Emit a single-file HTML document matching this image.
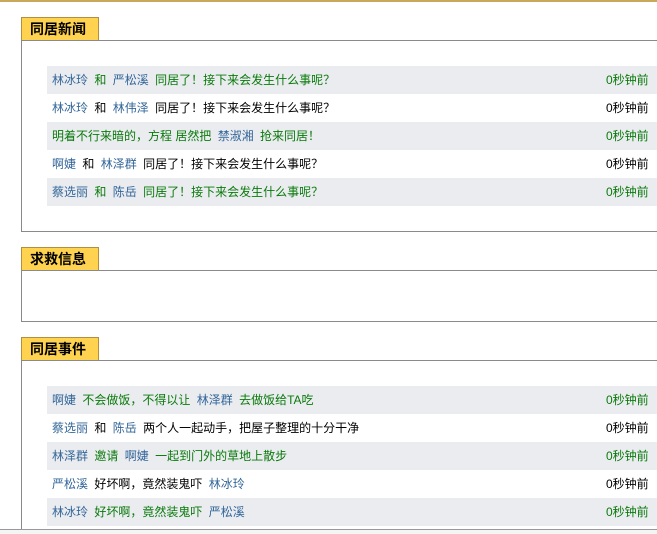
<!DOCTYPE html>
<html><head><meta charset="utf-8"><style>
*{margin:0;padding:0;box-sizing:border-box}
html,body{width:657px;height:534px;overflow:hidden}
body{background:#fff;font-family:"Liberation Sans","Noto Sans CJK SC","WenQuanYi Zen Hei",sans-serif;font-size:12px;position:relative}
.topline{position:absolute;left:0;top:0;width:657px;height:2px;background:#c8a85a}
.tab{position:absolute;left:21px;width:78px;height:24px;background:#ffd24f;border:1px solid #b09040;border-bottom:none;font-weight:bold;font-size:14px;line-height:22px;padding-left:8px;color:#000}
.box{position:absolute;left:21px;width:660px;border:1px solid #8a8a8a}
.row{position:absolute;left:47px;width:620px;height:28px;line-height:28px;padding-left:5px;white-space:nowrap}
.row span{margin-right:3px}
.row.g{background:#eaecf0}
.t{position:absolute;left:559px;top:0}
.n{color:#336699}
.gr{color:#0a7a0a}
.k{color:#000}
.bottom{position:absolute;left:0;top:529px;width:657px;height:5px;border-top:1px solid #999;background:#f4f4f4}
</style></head><body>
<div class="topline"></div>

<div class="tab" style="top:17px">同居新闻</div>
<div class="box" style="top:40px;height:192px"></div>
<div class="row g" style="top:66px"><span class="n">林冰玲</span> <span class="gr">和</span> <span class="n">严松溪</span> <span class="gr">同居了！接下来会发生什么事呢？</span><span class="t gr">0秒钟前</span></div>
<div class="row" style="top:94px"><span class="n">林冰玲</span> <span class="k">和</span> <span class="n">林伟泽</span> <span class="k">同居了！接下来会发生什么事呢？</span><span class="t k">0秒钟前</span></div>
<div class="row g" style="top:122px"><span class="gr">明着不行来暗的，方程 居然把</span> <span class="n">禁淑湘</span> <span class="gr">抢来同居！</span><span class="t gr">0秒钟前</span></div>
<div class="row" style="top:150px"><span class="n">啊婕</span> <span class="k">和</span> <span class="n">林泽群</span> <span class="k">同居了！接下来会发生什么事呢？</span><span class="t k">0秒钟前</span></div>
<div class="row g" style="top:178px"><span class="n">蔡选丽</span> <span class="gr">和</span> <span class="n">陈岳</span> <span class="gr">同居了！接下来会发生什么事呢？</span><span class="t gr">0秒钟前</span></div>

<div class="tab" style="top:247px">求救信息</div>
<div class="box" style="top:270px;height:52px"></div>

<div class="tab" style="top:337px">同居事件</div>
<div class="box" style="top:360px;height:170px;border-bottom:none"></div>
<div class="row g" style="top:386px"><span class="n">啊婕</span> <span class="gr">不会做饭，不得以让</span> <span class="n">林泽群</span> <span class="gr">去做饭给TA吃</span><span class="t gr">0秒钟前</span></div>
<div class="row" style="top:414px"><span class="n">蔡选丽</span> <span class="k">和</span> <span class="n">陈岳</span> <span class="k">两个人一起动手，把屋子整理的十分干净</span><span class="t k">0秒钟前</span></div>
<div class="row g" style="top:442px"><span class="n">林泽群</span> <span class="gr">邀请</span> <span class="n">啊婕</span> <span class="gr">一起到门外的草地上散步</span><span class="t gr">0秒钟前</span></div>
<div class="row" style="top:470px"><span class="n">严松溪</span> <span class="k">好坏啊，竟然装鬼吓</span> <span class="n">林冰玲</span><span class="t k">0秒钟前</span></div>
<div class="row g" style="top:498px"><span class="n">林冰玲</span> <span class="gr">好坏啊，竟然装鬼吓</span> <span class="n">严松溪</span><span class="t gr">0秒钟前</span></div>
<div class="bottom"></div>
</body></html>
